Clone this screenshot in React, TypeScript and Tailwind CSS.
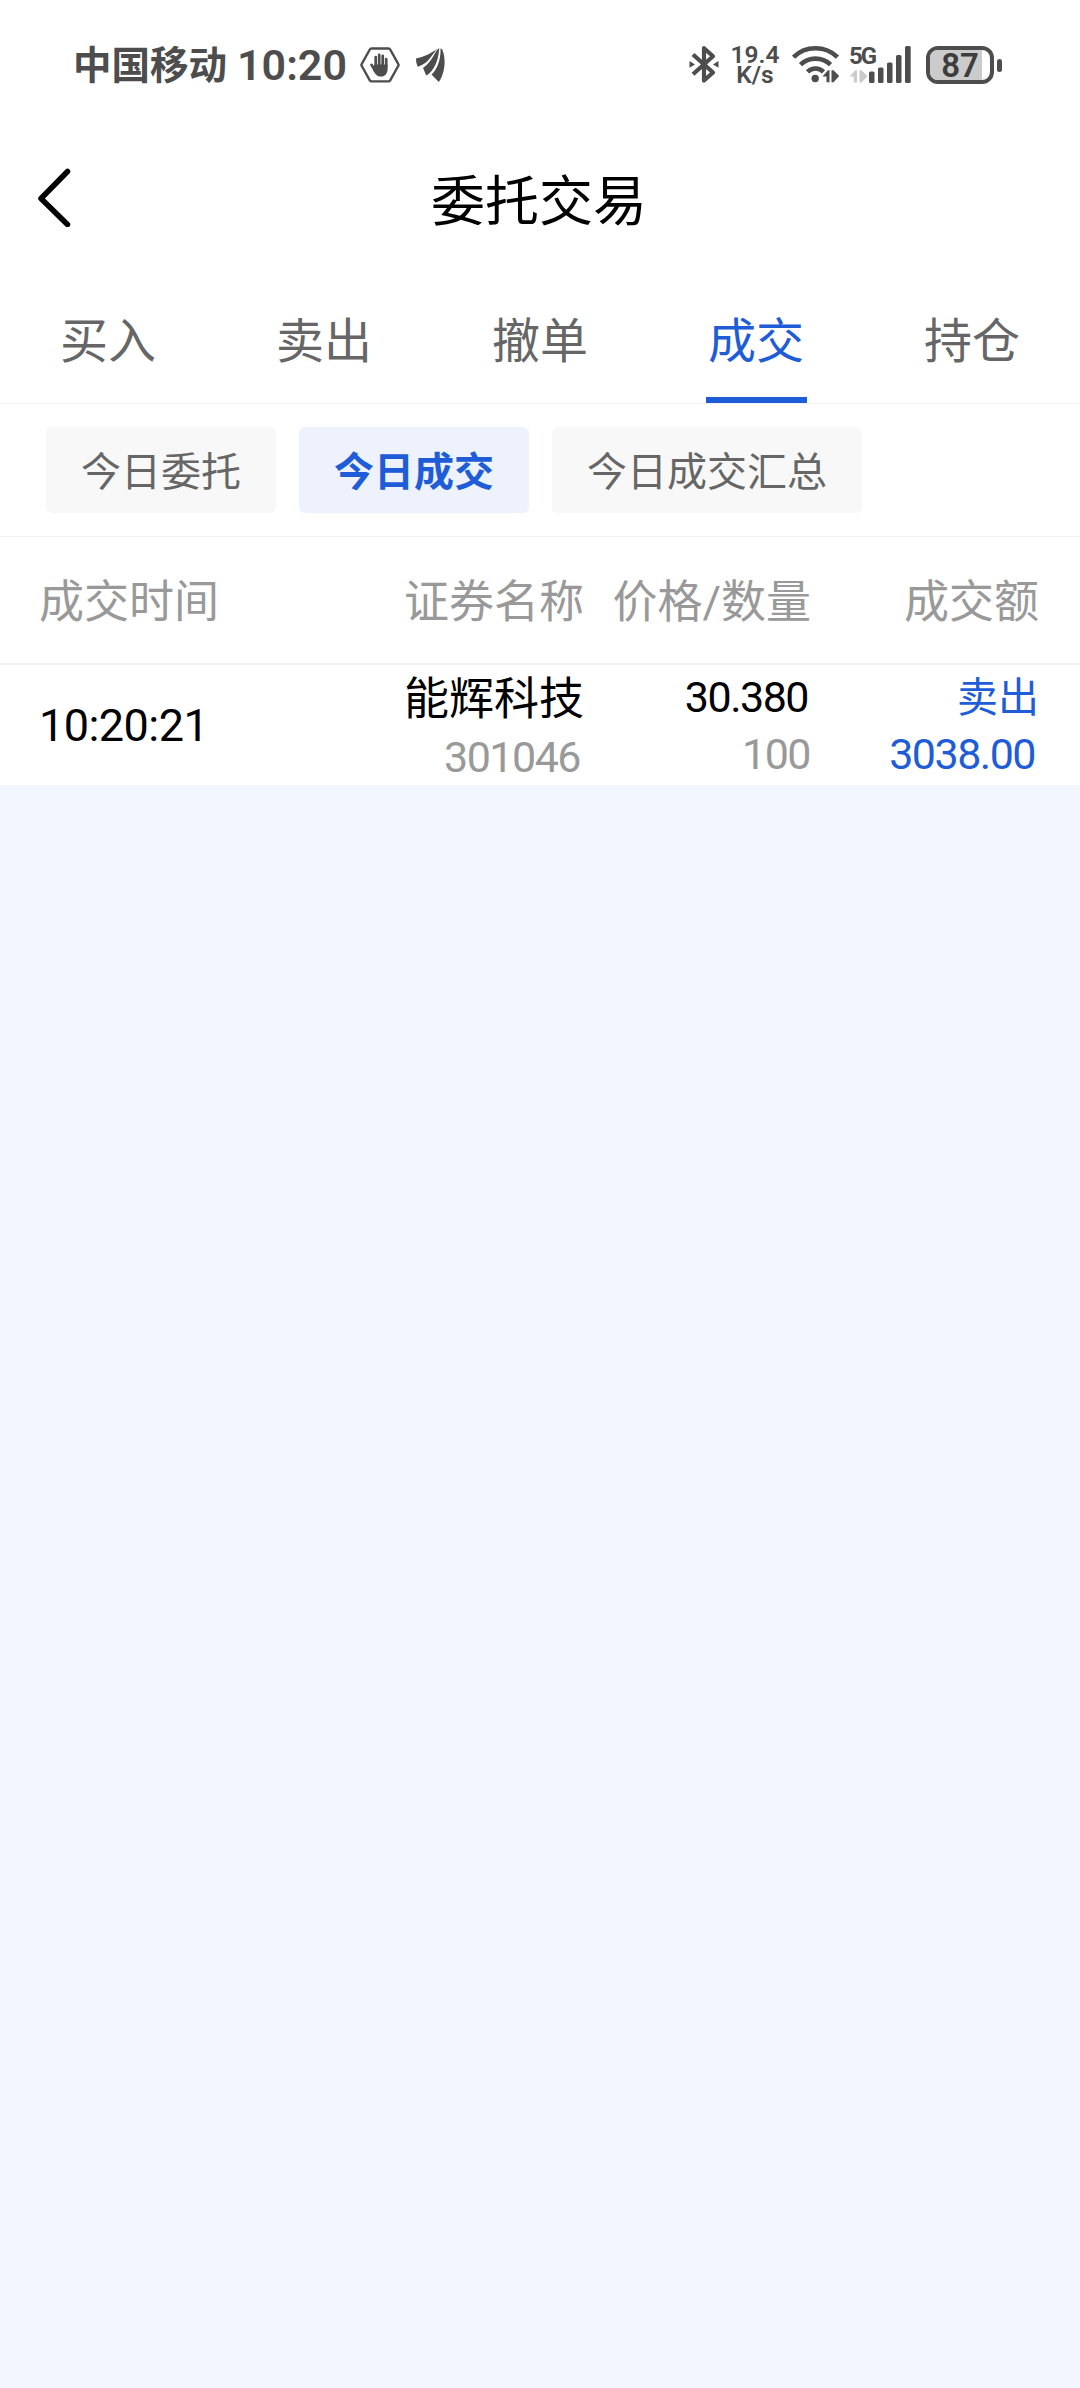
import { clsx } from 'clsx';

const TABS = ['买入', '卖出', '撤单', '成交', '持仓'];
const FILTERS = ['今日委托', '今日成交', '今日成交汇总'];
const COLUMNS = ['成交时间', '证券名称', '价格/数量', '成交额'];

const trades = [
    {
        id: 1,
        time: '10:20:21',
        name: '能辉科技',
        code: '301046',
        price: '30.380',
        quantity: '100',
        side: '卖出',
        amount: '3038.00',
    },
];

function HandIcon() {
    return (
        <svg width="40" height="36" viewBox="0 0 40 36" className="shrink-0">
            <path d="M11.5 1.500h17a2 2 0 0 1 1.700 1l8 14.300a2 2 0 0 1 0 2.200l-8 14.400a2 2 0 0 1-1.700 1h-17a2 2 0 0 1-1.700-1L1.800 19a2 2 0 0 1 0-2.200L9.800 2.500a2 2 0 0 1 1.700-1z" fill="none" stroke="#4d4d4d" strokeWidth="2.400" />
            <g stroke="#4d4d4d" strokeWidth="2.700" strokeLinecap="round" fill="none">
                <path d="M15.700 19V10.200M19.200 18V7.900M22.700 18V8.900M26.200 20V12" />
                <path d="M11.500 17.800l3.300 5.400" />
            </g>
            <path d="M14.300 17.500h13.250v4.700c0 4-2.400 7.300-6.400 7.300-3.900 0-5.800-2.200-8.100-6.300z" fill="#4d4d4d" />
        </svg>
    );
}

function FeatherIcon() {
    return (
        <svg width="31" height="35" viewBox="0 0 31 35" className="shrink-0">
            <g fill="#4d4d4d">
                <path d="M1 10.500C9 8.500 15 6 22 1 16.500 7.500 13.500 15.500 2.800 18.800 1.500 16 1 13.500 1 10.500z" />
                <path d="M23.300 .500C18.500 6 16.500 14.500 8 19.800l3.200 7.700C19 23.500 23.500 12.500 24.200 .500z" />
                <path d="M25.500 .500C26 10.500 22.500 21 16.500 26.500l7.300 7.500C30 25.500 31.500 10.500 27 1z" />
            </g>
        </svg>
    );
}

function BluetoothIcon() {
    return (
        <svg width="30" height="40" viewBox="0 0 30 40" className="shrink-0">
            <path d="M4 9.500l20 18-9 8V3.200l9 8-20 18" fill="none" stroke="#4d4d4d" strokeWidth="4.200" strokeLinejoin="round" />
            <path d="M.5 16l5.500 3.400L.5 22.800zM29.500 16L24 19.400l5.500 3.400z" fill="#4d4d4d" />
        </svg>
    );
}

function WifiIcon() {
    return (
        <svg width="48" height="40" viewBox="0 0 48 40" className="shrink-0">
            <g fill="none" stroke="#4d4d4d" strokeWidth="4.600">
                <path d="M1.500 12.200C13.500.300 33.500.300 45.500 12.200" />
                <path d="M8.500 19.600c8.500-8 21.500-8 30 0" />
                <path d="M15.500 26.800c4.500-4.400 11.500-4.400 16 0" />
            </g>
            <circle cx="23.200" cy="33.500" r="3.700" fill="#4d4d4d" />
            <path d="M30.500 31.500l5.500-6.300h1.500v12h-3v-5.700zM39.500 25.200h2l5.700 5.800-5.700 6.200h-2z" fill="#4d4d4d" />
        </svg>
    );
}

function SignalIcon() {
    return (
        <svg width="63" height="40" viewBox="0 0 63 40" className="shrink-0">
            <path d="M.5 31.500l6-6.300H8v12.300H4.700v-6zM10.500 25.200h2l6 6-6 6.300h-2z" fill="#cbcbcb" />
            <g fill="#4d4d4d">
                <rect x="20" y="26.500" width="5.500" height="11.500" rx="1.500" />
                <rect x="29" y="22.500" width="5.500" height="15.500" rx="1.500" />
                <rect x="38" y="17.500" width="5.500" height="20.500" rx="1.500" />
                <rect x="47" y="10" width="5.500" height="28" rx="1.500" />
                <rect x="56" y="1" width="5.700" height="37" rx="1.500" />
            </g>
        </svg>
    );
}

function Battery({ level }: { level: number }) {
    return (
        <div className="flex items-center gap-[3px]">
            <div className="relative h-[38px] w-[68px] overflow-hidden rounded-[12px] border-4 border-[#4d4d4d]">
                <div className="absolute inset-y-0 left-0 bg-[#cbcbcb]" style={{ width: `${level}%` }} />
                <span className="absolute inset-0 flex items-center justify-center text-[33px] leading-none font-semibold text-[#3d3d3d]">
                    {level}
                </span>
            </div>
            <div className="h-[13px] w-[5px] rounded-full bg-[#4d4d4d]" />
        </div>
    );
}

function StatusBar() {
    return (
        <div className="flex h-[123px] items-start justify-between pt-[45px] pr-[78px] pl-[73px] font-[Roboto,'Noto_Sans_CJK_SC',sans-serif] text-[#4d4d4d]">
            <div className="flex h-10 items-center">
                <span className="pt-[2px] text-[38.500px] leading-10 font-bold">中国移动</span>
                <span className="ml-[10px] w-[123px] text-[43px] leading-10 font-semibold whitespace-nowrap">10:20</span>
                <HandIcon />
                <div className="ml-[15px]">
                    <FeatherIcon />
                </div>
            </div>
            <div className="flex h-10 items-center">
                <BluetoothIcon />
                <div className="ml-[10px] w-[52px] text-center text-[24.500px] leading-[20px] font-semibold">
                    19.4
                    <br />
                    K/s
                </div>
                <div className="ml-[11px]">
                    <WifiIcon />
                </div>
                <div className="relative ml-[9px]">
                    <SignalIcon />
                    <span className="absolute top-0 left-0 text-[24px] leading-[22px] font-bold tracking-[-0.08em]">5G</span>
                </div>
                <div className="ml-[14px]">
                    <Battery level={87} />
                </div>
            </div>
        </div>
    );
}

function Header() {
    return (
        <header className="flex h-[148px] items-center px-[37px]">
            <svg width="34" height="60" viewBox="0 0 34 60" className="shrink-0">
                <path d="M30.500 4.500L4 31.500l26.500 26" fill="none" stroke="#000" strokeWidth="5.500" strokeLinecap="round" strokeLinejoin="round" />
            </svg>
            <h1 className="flex-1 pt-[11px] pr-[36px] text-center text-[54px] leading-none text-black">委托交易</h1>
        </header>
    );
}

export default function App() {
    return (
        <div className="min-h-[2388px] w-[1080px] bg-[#f3f6ff] font-[Roboto,'Noto_Sans_CJK_SC',sans-serif]" lang="zh-CN">
            <div className="bg-white">
                <StatusBar />
                <Header />

                <nav className="grid h-[133px] grid-cols-5 border-b border-[#f2f2f2]">
                    {TABS.map((tab) => (
                        <div
                            key={tab}
                            className={clsx(
                                'relative flex items-center justify-center pt-[10px] text-[48px] leading-none',
                                tab === '成交' ? 'text-[#1e5dd7]' : 'text-[#666666]',
                            )}
                        >
                            {tab}
                            {tab === '成交' && <div className="absolute bottom-0 h-[6px] w-[101px] bg-[#1e5dd7]" />}
                        </div>
                    ))}
                </nav>

                <div className="flex gap-[23px] border-b border-[#f2f2f2] px-[46px] py-[23px]">
                    {FILTERS.map((filter) => (
                        <button
                            key={filter}
                            className={clsx(
                                'h-[86px] rounded-[6px] px-[35px] pt-[6px] text-[40px] leading-none',
                                filter === '今日成交' ? 'bg-[#edf2fd] font-bold text-[#1e5dd7]' : 'bg-[#f8f8f8] text-[#666666]',
                            )}
                        >
                            {filter}
                        </button>
                    ))}
                </div>

                <div className="grid h-[128px] grid-cols-[220px_325px_227px_228px] items-center border-b-2 border-[#f2f2f2] px-[39px] pt-1 text-[45px] leading-none text-[#999999]">
                    {COLUMNS.map((column) => (
                        <span key={column} className="text-right whitespace-nowrap first:text-left">
                            {column}
                        </span>
                    ))}
                </div>

                {trades.map((trade) => (
                    <div
                        key={trade.id}
                        className="grid h-[120px] grid-cols-[220px_325px_227px_228px] px-[39px] text-right text-[43px] tracking-[-0.035em] text-black"
                    >
                        <span className="pt-px text-left text-[45px] leading-[120px] tracking-[-0.012em]">{trade.time}</span>
                        <div className="flex flex-col pt-[5px]">
                            <span className="text-[45px] leading-[60px] tracking-normal">{trade.name}</span>
                            <span className="pr-[4px] leading-[55px] text-[#999999]">{trade.code}</span>
                        </div>
                        <div className="flex flex-col pt-[4px]">
                            <span className="pr-[3px] leading-[57px]">{trade.price}</span>
                            <span className="pr-px leading-[57px] text-[#999999]">{trade.quantity}</span>
                        </div>
                        <div className="flex flex-col pt-[4px] text-[#1e5dd7]">
                            <span className="h-[57px] pt-px text-[41px] leading-[57px] tracking-normal">{trade.side}</span>
                            <span className="pr-[4px] leading-[57px]">{trade.amount}</span>
                        </div>
                    </div>
                ))}
            </div>
        </div>
    );
}
